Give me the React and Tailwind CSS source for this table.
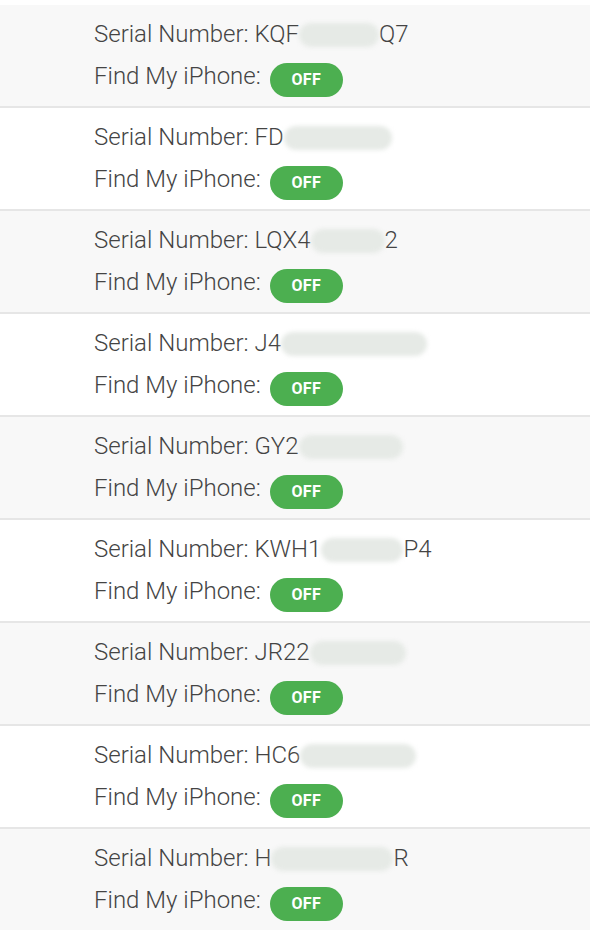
import React from "react";

const rows = [
  { pre: "KQF", smudge: 80, post: "Q7", rounded: "rounded-[12px]" },
  { pre: "FD", smudge: 108, post: "", rounded: "rounded-full" },
  { pre: "LQX4", smudge: 74, post: "2", rounded: "rounded-[14px]" },
  { pre: "J4", smudge: 146, post: "", rounded: "rounded-full" },
  { pre: "GY2", smudge: 104, post: "", rounded: "rounded-full" },
  { pre: "KWH1", smudge: 82, post: "P4", rounded: "rounded-full" },
  { pre: "JR22", smudge: 96, post: "", rounded: "rounded-full" },
  { pre: "HC6", smudge: 116, post: "", rounded: "rounded-full" },
  { pre: "H", smudge: 122, post: "R", rounded: "rounded-full" },
];

function Row({ r, i }) {
  const gray = i % 2 === 0;
  return (
    <div
      className={
        (gray ? "bg-[#f8f8f8] " : "bg-white ") +
        (i < rows.length - 1 ? "border-b-2 border-[#e6e6e6] " : "") +
        "pl-[94px] pt-[8px] pb-[9px]"
      }
    >
      <div className="h-[42px] flex items-center text-[24px] leading-[42px] text-[#444] whitespace-nowrap">
        <span>Serial Number: {r.pre}</span>
        <span
          className={
            "inline-block h-[24px] bg-[#e6eae6] blur-[2px] mt-[2px] " + r.rounded
          }
          style={{ width: r.smudge }}
        />
        {r.post && <span>{r.post}</span>}
      </div>
      <div className="h-[42px] flex items-center text-[24px] leading-[42px] text-[#444] whitespace-nowrap">
        <span>Find My iPhone:</span>
        <span className="ml-[9px] mt-[8px] inline-flex items-center justify-center w-[73px] h-[34px] rounded-full bg-[#4caf50] text-white text-[16px] font-bold leading-none tracking-[0.3px]">
          OFF
        </span>
      </div>
    </div>
  );
}

export default function App() {
  return (
    <div
      className="w-[590px] h-[943px] bg-white pt-[5px] overflow-hidden font-light"
      style={{ fontFamily: "Roboto, 'Noto Sans', sans-serif" }}
    >
      {rows.map((r, i) => (
        <Row key={i} r={r} i={i} />
      ))}
    </div>
  );
}
